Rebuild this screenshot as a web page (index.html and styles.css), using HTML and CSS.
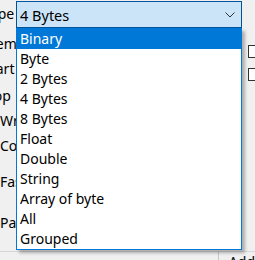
FILE: index.html
```html
<!DOCTYPE html>
<html>
<head>
<meta charset="utf-8">
<link rel="stylesheet" href="styles.css">
</head>
<body>
<div class="page">
  <div class="labels">
    <div class="lbl l-type">Type</div>
    <div class="lbl l-item">Item</div>
    <div class="lbl l-start">Start</div>
    <div class="lbl l-stop">Stop</div>
    <div class="lbl l-wr">Writable</div>
    <div class="lbl l-co">CopyOnWrite</div>
    <div class="lbl l-fast">Fast scan</div>
    <div class="lbl l-pause">Pause</div>
  </div>
  <div class="checks">
    <div class="chk"></div>
    <div class="chk"></div>
  </div>
  <div class="bottom">
    <div class="cell"></div>
    <div class="cell-right">Add</div>
  </div>
  <div class="combo">
    <span class="combo-text">4 Bytes</span>
    <svg class="chev" width="10" height="6" viewBox="0 0 10 6"><path d="M0.5 0.5 L5 5 L9.5 0.5" fill="none" stroke="#333" stroke-width="1"/></svg>
  </div>
  <ul class="list">
    <li class="item sel">Binary</li>
    <li class="item">Byte</li>
    <li class="item">2 Bytes</li>
    <li class="item">4 Bytes</li>
    <li class="item">8 Bytes</li>
    <li class="item">Float</li>
    <li class="item">Double</li>
    <li class="item">String</li>
    <li class="item">Array of byte</li>
    <li class="item">All</li>
    <li class="item">Grouped</li>
  </ul>
</div>
</body>
</html>
```

FILE: styles.css
```css
html, body {
  margin: 0;
  padding: 0;
  background: #f0f0f0;
}
body {
  font-family: "Noto Sans", "Liberation Sans", sans-serif;
  font-size: 14px;
  color: #000;
}
.page {
  position: relative;
  width: 255px;
  height: 260px;
  overflow: hidden;
}
.labels {
  display: flex;
  flex-direction: column;
  padding-top: 4px;
}
.lbl {
  white-space: nowrap;
  height: 20px;
  line-height: 20px;
}
.l-type { margin-left: -17px; }
.l-item { margin-left: -14px; margin-top: 10px; }
.l-start { margin-left: -17px; margin-top: 5px; }
.l-stop { margin-left: -19px; margin-top: 7px; }
.l-wr { margin-left: 0; margin-top: 5px; }
.l-co { margin-left: 0; margin-top: 5px; }
.l-fast { margin-left: 0; margin-top: 16px; }
.l-pause { margin-left: 0; margin-top: 21px; }

.checks {
  position: absolute;
  left: 248px;
  top: 45px;
  display: flex;
  flex-direction: column;
  gap: 10px;
}
.chk {
  width: 13px;
  height: 13px;
  border: 1px solid #333;
  background: #fff;
  box-sizing: border-box;
}
.bottom {
  position: absolute;
  left: 0;
  top: 251px;
  width: 255px;
  height: 9px;
  border-top: 1px solid #d6d6d6;
  display: flex;
}
.cell {
  width: 227px;
  border-right: 1px solid #c8c8c8;
}
.cell-right {
  padding-left: 10px;
  line-height: 20px;
  white-space: nowrap;
}

.combo {
  position: absolute;
  left: 16px;
  top: 1px;
  width: 226px;
  height: 27px;
  box-sizing: border-box;
  background: #cce4f7;
  border: 1px solid #005499;
  display: flex;
  align-items: center;
  justify-content: space-between;
  padding: 0 6px 0 3px;
}
.combo-text {
  line-height: 20px;
  font-size: 14.5px;
}
.chev {
  display: block;
}
.list {
  position: absolute;
  left: 16px;
  top: 28px;
  width: 226px;
  margin: 0;
  padding: 0;
  list-style: none;
  box-sizing: border-box;
  background: #fff;
  border: 1px solid #0078d7;
  box-shadow: 3px 3px 3px rgba(0, 0, 0, 0.28);
}
.item {
  height: 20px;
  line-height: 20px;
  padding-left: 3px;
  white-space: nowrap;
}
.item.sel {
  background: #0078d7;
  color: #fff;
}
```
